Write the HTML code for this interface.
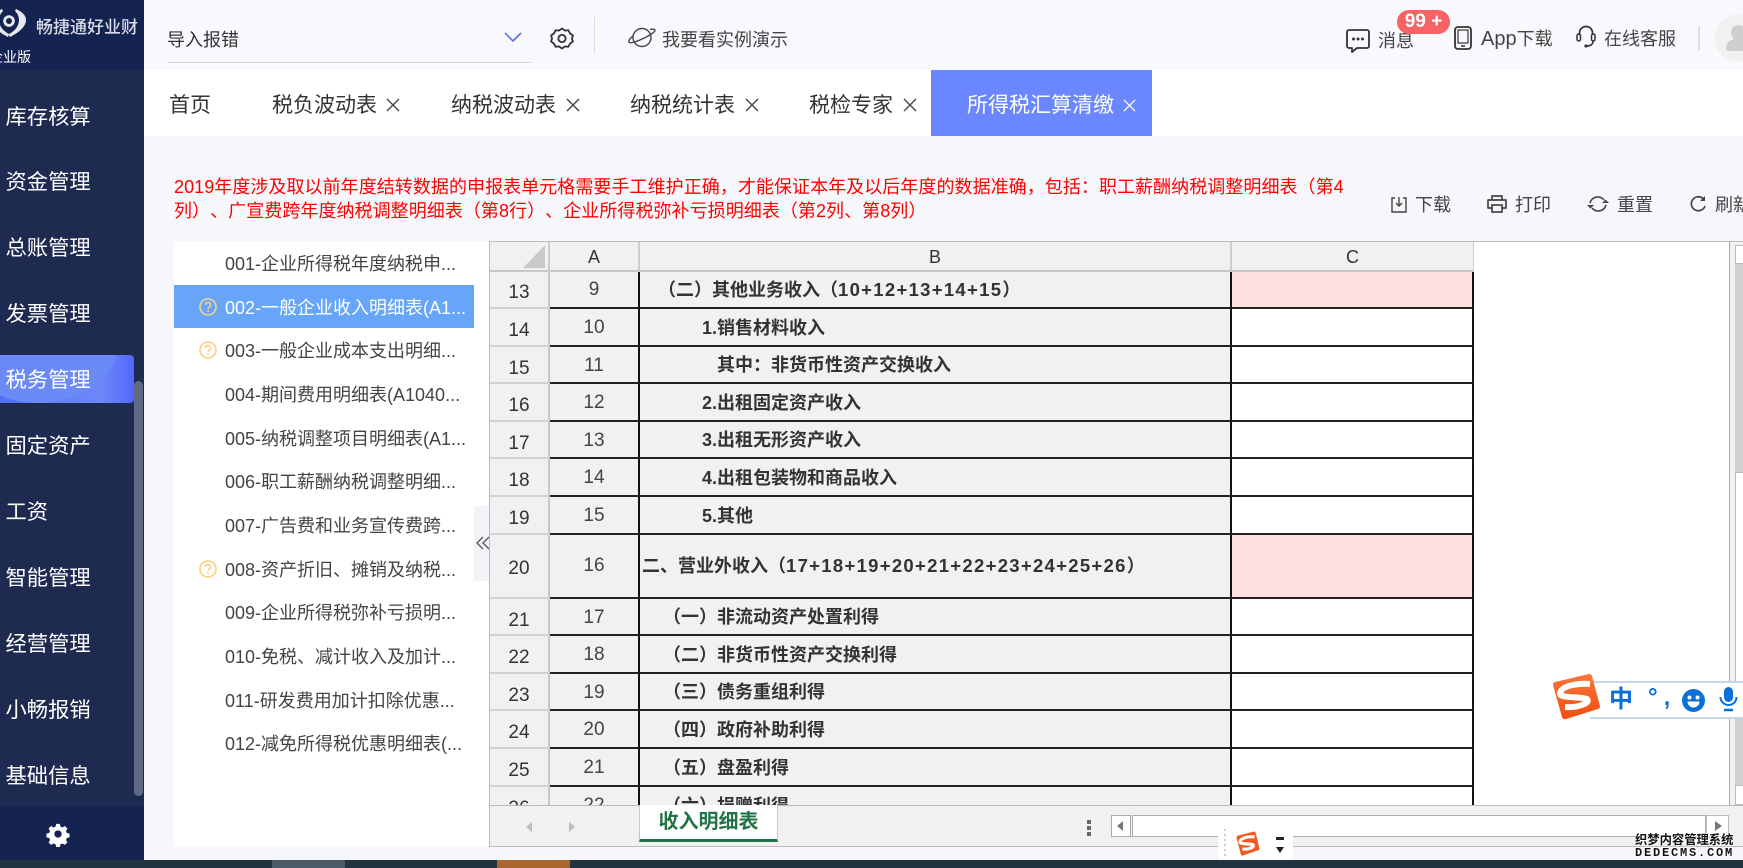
<!DOCTYPE html>
<html lang="zh-CN">
<head>
<meta charset="utf-8">
<title>所得税汇算清缴</title>
<style>
*{box-sizing:border-box;margin:0;padding:0}
html,body{width:1743px;height:868px;overflow:hidden;background:#f6f7fb}
body{position:relative;font-family:"Liberation Sans","Noto Sans CJK SC",sans-serif;color:#333;font-size:18px;text-spacing-trim:space-all}
.a{position:absolute;white-space:nowrap}
svg{position:absolute;display:block;overflow:visible}
.nav{position:absolute;left:5.5px;width:120px;height:30px;line-height:30px;color:#fff;font-size:21.3px;white-space:nowrap}
.tab{position:absolute;top:91px;height:30px;line-height:30px;font-size:21px;color:#333;white-space:nowrap}
.li{position:absolute;left:225px;height:26px;line-height:26px;font-size:18px;color:#444;white-space:nowrap}
.row{position:absolute;left:490px;width:984px;display:flex}
.row>div{height:100%;flex:none;white-space:nowrap;overflow:hidden}
.h{width:60px;background:#f1f1f1;border-bottom:2px solid #d2d2d2;border-right:2px solid #c8c8c8;text-align:center;color:#333;padding-top:4px;font-size:19px}
.n{width:90px;background:#f1f1f1;border-bottom:2px solid #222;border-right:2px solid #111;text-align:center;color:#444;font-size:19px;padding-top:1px}
.b{width:592px;background:#f1f1f1;border-bottom:2px solid #222;border-right:2px solid #111;font-weight:700;color:#333;font-size:18px;padding-top:1px}
.c{width:242px;background:#fff;border-bottom:2px solid #222;border-right:2px solid #111}
.p{background:#fce0e0}
.d{font-size:18.5px;letter-spacing:1.3px}
.red{position:absolute;left:174px;height:24px;line-height:24px;font-size:18px;color:#f00;white-space:nowrap;letter-spacing:.055px}
</style>
</head>
<body>

<!-- sidebar -->
<div class="a" style="left:0;top:0;width:144px;height:860px;background:#1e2a50"></div>
<div class="a" style="left:0;top:0;width:144px;height:70px;background:#152352"></div>
<svg style="left:0;top:0" width="40" height="45" viewBox="0 0 40 45">
<path d="M16 9 C22 12 26 15 26 20 C26 27 18 33 10 37 C9.500 36 9 35 9 34 C15 31 19 26 19 20 C19 16 17 13 15 11Z" fill="#e8e9ee"/>
<path d="M2 9 C-4 12 -8 15 -8 20 C-8 27 0 33 8 37 C8.500 36 9 35 9 34 C3 31 -1 26 -1 20 C-1 16 1 13 3 11Z" fill="#e8e9ee"/>
<circle cx="9" cy="21" r="4.400" fill="none" stroke="#e8e9ee" stroke-width="2.800"/>
</svg>
<div class="a" style="left:36px;top:16px;height:24px;line-height:24px;font-size:17px;color:#d8dbe6;font-weight:500">畅捷通好业财</div>
<div class="a" style="left:-11px;top:47px;height:20px;line-height:20px;font-size:14px;color:#fff">企业版</div>

<div class="a" style="left:0;top:355px;width:134px;height:48px;border-radius:0 4px 4px 0;background:linear-gradient(90deg,#4f70f0 0%,#6e89fb 75%,#5268fb 100%);overflow:hidden">
<div class="a" style="left:-40px;top:-70px;width:158px;height:118px;border-radius:50%;background:#6b8af8"></div>
</div>
<div class="nav" style="top:102px">库存核算</div>
<div class="nav" style="top:167px">资金管理</div>
<div class="nav" style="top:233px">总账管理</div>
<div class="nav" style="top:299px">发票管理</div>
<div class="nav" style="top:365px">税务管理</div>
<div class="nav" style="top:431px">固定资产</div>
<div class="nav" style="top:497px">工资</div>
<div class="nav" style="top:563px">智能管理</div>
<div class="nav" style="top:629px">经营管理</div>
<div class="nav" style="top:695px">小畅报销</div>
<div class="nav" style="top:761px">基础信息</div>
<div class="a" style="left:134px;top:381px;width:9px;height:415px;border-radius:5px;background:#5f6a85"></div>
<div class="a" style="left:0;top:807px;width:144px;height:53px;background:#152352"></div>
<svg style="left:47px;top:823px" width="22" height="22" viewBox="0 0 24 24">
<path fill="#fff" fill-rule="evenodd" d="M10 1h4l.7 3 2.200.9 2.600-1.600 2.800 2.800-1.600 2.600.9 2.200 3 .7v4l-3 .7-.9 2.200 1.600 2.600-2.800 2.800-2.600-1.600-2.200.9-.7 3h-4l-.7-3-2.200-.9-2.600 1.600-2.800-2.800 1.600-2.600-.9-2.200-3-.7v-4l3-.7.9-2.200-1.600-2.600 2.800-2.800 2.600 1.600 2.200-.9zM12 8a4 4 0 1 0 0 8 4 4 0 0 0 0-8z"/>
</svg>

<!-- header -->
<div class="a" style="left:144px;top:0;width:1599px;height:70px;background:#f8f9fd"></div>
<div class="a" style="left:167px;top:27px;height:26px;line-height:26px;font-size:18px;color:#333">导入报错</div>
<div class="a" style="left:167px;top:62px;width:364px;height:1px;background:#d9d9d9"></div>
<svg style="left:504px;top:32px" width="18" height="10" viewBox="0 0 18 10"><path d="M1 1l8 8 8-8" fill="none" stroke="#5a6fe0" stroke-width="1.600"/></svg>
<svg style="left:550px;top:27px" width="24" height="23" viewBox="0 0 24 24"><path fill="none" stroke="#333" stroke-width="1.900" stroke-linejoin="round" d="M12 1.500l3 2.200 3.700-.3 1.700 3.300 3 2.200-1 3.100 1 3.100-3 2.200-1.700 3.300-3.700-.3-3 2.200-3-2.200-3.700.3-1.700-3.300-3-2.200 1-3.100-1-3.100 3-2.200 1.700-3.300 3.700.3z"/><circle cx="12" cy="12" r="3.800" fill="none" stroke="#333" stroke-width="1.900"/></svg>
<div class="a" style="left:594px;top:17px;width:1px;height:37px;background:#ddd"></div>
<svg style="left:628px;top:27px" width="28" height="21" viewBox="0 0 28 21"><circle cx="14" cy="10.500" r="9" fill="none" stroke="#444" stroke-width="1.400"/><path d="M5 9C1 12 0 15 1.500 15.500 5 17 22 9 26.500 4.500 28 2.500 26 1.500 22 2.500" fill="none" stroke="#444" stroke-width="1.400"/></svg>
<div class="a" style="left:662px;top:27px;height:26px;line-height:26px;font-size:18px;color:#444">我要看实例演示</div>

<svg style="left:1346px;top:29px" width="24" height="24" viewBox="0 0 24 24"><path d="M3 1h18a2 2 0 0 1 2 2v14a2 2 0 0 1-2 2H11l-5 4v-4H3a2 2 0 0 1-2-2V3a2 2 0 0 1 2-2z" fill="none" stroke="#333" stroke-width="1.800" stroke-linejoin="round"/><circle cx="7.500" cy="10" r="1.500" fill="#333"/><circle cx="12" cy="10" r="1.500" fill="#333"/><circle cx="16.500" cy="10" r="1.500" fill="#333"/></svg>
<div class="a" style="left:1378px;top:28px;height:26px;line-height:26px;font-size:18px;color:#444">消息</div>
<div class="a" style="left:1397px;top:10px;width:53px;height:24px;border-radius:12px;background:#f96264;color:#fff;font-weight:700;font-size:19px;line-height:23px;text-align:center">99 +</div>
<svg style="left:1454px;top:26px" width="18" height="24" viewBox="0 0 18 24"><rect x="1" y="1" width="16" height="22" rx="3" fill="none" stroke="#333" stroke-width="1.800"/><rect x="4" y="4" width="10" height="13" fill="none" stroke="#333" stroke-width="1.200"/><path d="M7 20h4" stroke="#333" stroke-width="1.500"/></svg>
<div class="a" style="left:1481px;top:26px;height:26px;line-height:26px;font-size:18px;color:#444"><span style="font-size:20px">App</span>下载</div>
<svg style="left:1576px;top:25px" width="20" height="23" viewBox="0 0 20 23"><path d="M3.500 10V8a6.500 6.500 0 0 1 13 0v2" fill="none" stroke="#333" stroke-width="1.700"/><rect x="1" y="9" width="3.500" height="7" rx="1.700" fill="none" stroke="#333" stroke-width="1.500"/><rect x="15.500" y="9" width="3.500" height="7" rx="1.700" fill="none" stroke="#333" stroke-width="1.500"/><path d="M17 16c0 3-2 5-6 5" fill="none" stroke="#333" stroke-width="1.600"/><circle cx="10" cy="21" r="1.600" fill="#333"/></svg>
<div class="a" style="left:1604px;top:26px;height:26px;line-height:26px;font-size:18px;color:#444">在线客服</div>
<div class="a" style="left:1698px;top:26px;width:2px;height:24px;background:#ddd"></div>
<div class="a" style="left:1715px;top:14px;width:48px;height:48px;border-radius:50%;background:#f1f1f1;overflow:hidden">
<div class="a" style="left:16px;top:11px;width:15px;height:15px;border-radius:50%;background:#cfcfcf"></div>
<div class="a" style="left:11px;top:25px;width:28px;height:12px;border-radius:10px 10px 3px 3px;background:#cfcfcf"></div>
</div>

<!-- tabs -->
<div class="a" style="left:144px;top:70px;width:1599px;height:66px;background:#fff"></div>
<div class="a" style="left:931px;top:70px;width:221px;height:66px;background:#6b87ff"></div>
<div class="tab" style="left:169px">首页</div>
<div class="tab" style="left:272px">税负波动表</div>
<div class="tab" style="left:451px">纳税波动表</div>
<div class="tab" style="left:630px">纳税统计表</div>
<div class="tab" style="left:809px">税检专家</div>
<div class="tab" style="left:967px;color:#fff">所得税汇算清缴</div>
<svg style="left:386px;top:98px" width="14" height="14" viewBox="0 0 14 14"><path d="M1 1l12 12M13 1L1 13" stroke="#444" stroke-width="1.400"/></svg>
<svg style="left:566px;top:98px" width="14" height="14" viewBox="0 0 14 14"><path d="M1 1l12 12M13 1L1 13" stroke="#444" stroke-width="1.400"/></svg>
<svg style="left:745px;top:98px" width="14" height="14" viewBox="0 0 14 14"><path d="M1 1l12 12M13 1L1 13" stroke="#444" stroke-width="1.400"/></svg>
<svg style="left:903px;top:98px" width="14" height="14" viewBox="0 0 14 14"><path d="M1 1l12 12M13 1L1 13" stroke="#444" stroke-width="1.400"/></svg>
<svg style="left:1123px;top:99px" width="13" height="13" viewBox="0 0 14 14"><path d="M1 1l12 12M13 1L1 13" stroke="#fff" stroke-width="1.400"/></svg>

<!-- notice -->
<div class="red" style="top:175px">2019年度涉及取以前年度结转数据的申报表单元格需要手工维护正确，才能保证本年及以后年度的数据准确，包括：职工薪酬纳税调整明细表（第4</div>
<div class="red" style="top:199px">列）、广宣费跨年度纳税调整明细表（第8行）、企业所得税弥补亏损明细表（第2列、第8列）</div>

<!-- toolbar -->
<svg style="left:1391px;top:196px" width="16" height="17" viewBox="0 0 16 17"><path d="M4 2H1v14h14V2h-3M8 1v9M5 7l3 3 3-3" fill="none" stroke="#444" stroke-width="1.400"/></svg>
<div class="a" style="left:1415px;top:192px;height:26px;line-height:26px;font-size:18px;color:#444">下载</div>
<svg style="left:1487px;top:195px" width="20" height="18" viewBox="0 0 20 18"><path d="M5 5V1h10v4M5 13H1V5h18v8h-4" fill="none" stroke="#444" stroke-width="1.700" stroke-linejoin="round"/><rect x="5" y="10" width="10" height="7" fill="none" stroke="#444" stroke-width="1.700"/></svg>
<div class="a" style="left:1515px;top:192px;height:26px;line-height:26px;font-size:18px;color:#444">打印</div>
<svg style="left:1587px;top:195px" width="22" height="18" viewBox="0 0 22 18"><path d="M3 8a8 8 0 0 1 14-3M19 10a8 8 0 0 1-14 3" fill="none" stroke="#444" stroke-width="1.600"/><path d="M15 8h7l-3.500-3.500zM7 10H0l3.500 3.500z" fill="#444"/></svg>
<div class="a" style="left:1617px;top:192px;height:26px;line-height:26px;font-size:18px;color:#444">重置</div>
<svg style="left:1690px;top:195px" width="17" height="18" viewBox="0 0 17 18"><path d="M15 11a7 7 0 1 1-2-7.500" fill="none" stroke="#444" stroke-width="1.700"/><path d="M15 1v5h-5z" fill="#444"/></svg>
<div class="a" style="left:1715px;top:192px;height:26px;line-height:26px;font-size:18px;color:#444">刷新</div>

<!-- left list -->
<div class="a" style="left:174px;top:241px;width:316px;height:605px;background:#fff"></div>
<div class="a" style="left:174px;top:285px;width:300px;height:43px;background:#66a5f8"></div>
<div class="li" style="top:251px">001-企业所得税年度纳税申...</div>
<div class="li" style="top:295px;color:#fff">002-一般企业收入明细表(A1...</div>
<div class="li" style="top:338px">003-一般企业成本支出明细...</div>
<div class="li" style="top:382px">004-期间费用明细表(A1040...</div>
<div class="li" style="top:426px">005-纳税调整项目明细表(A1...</div>
<div class="li" style="top:469px">006-职工薪酬纳税调整明细...</div>
<div class="li" style="top:513px">007-广告费和业务宣传费跨...</div>
<div class="li" style="top:557px">008-资产折旧、摊销及纳税...</div>
<div class="li" style="top:600px">009-企业所得税弥补亏损明...</div>
<div class="li" style="top:644px">010-免税、减计收入及加计...</div>
<div class="li" style="top:688px">011-研发费用加计扣除优惠...</div>
<div class="li" style="top:731px">012-减免所得税优惠明细表(...</div>
<svg style="left:199px;top:298px" width="18" height="18" viewBox="0 0 18 18"><circle cx="9" cy="9" r="8" fill="none" stroke="#f5d28a" stroke-width="1.600"/><path d="M6.500 7a2.500 2.500 0 1 1 3.700 2.200C9.400 9.700 9 10 9 11" fill="none" stroke="#f5d28a" stroke-width="1.500"/><circle cx="9" cy="13.300" r="1" fill="#f5d28a"/></svg>
<svg style="left:199px;top:341px" width="18" height="18" viewBox="0 0 18 18"><circle cx="9" cy="9" r="8" fill="none" stroke="#fbcf7a" stroke-width="1.600"/><path d="M6.500 7a2.500 2.500 0 1 1 3.700 2.200C9.400 9.700 9 10 9 11" fill="none" stroke="#fbcf7a" stroke-width="1.500"/><circle cx="9" cy="13.300" r="1" fill="#fbcf7a"/></svg>
<svg style="left:199px;top:560px" width="18" height="18" viewBox="0 0 18 18"><circle cx="9" cy="9" r="8" fill="none" stroke="#fbcf7a" stroke-width="1.600"/><path d="M6.500 7a2.500 2.500 0 1 1 3.700 2.200C9.400 9.700 9 10 9 11" fill="none" stroke="#fbcf7a" stroke-width="1.500"/><circle cx="9" cy="13.300" r="1" fill="#fbcf7a"/></svg>
<div class="a" style="left:474px;top:506px;width:15px;height:75px;background:#f3f4fa"></div>
<svg style="left:476px;top:536px" width="13" height="14" viewBox="0 0 13 14"><path d="M7 1L1 7l6 6M13 1L7 7l6 6" fill="none" stroke="#555" stroke-width="1.300"/></svg>

<!-- sheet -->
<div class="a" style="left:489px;top:241px;width:1254px;height:606px;background:#fff;border:1px solid #bbb;border-right:0"></div>

<div class="a" style="left:0;top:0;width:1743px;height:805px;overflow:hidden;pointer-events:none">
<div class="row" style="top:271px;height:38px;line-height:36px"><div class="h">13</div><div class="n">9</div><div class="b" style="padding-left:18px">（二）其他业务收入（<span class="d">10+12+13+14+15</span>）</div><div class="c p"></div></div>
<div class="row" style="top:309px;height:38px;line-height:36px"><div class="h">14</div><div class="n">10</div><div class="b" style="padding-left:62px">1.销售材料收入</div><div class="c"></div></div>
<div class="row" style="top:347px;height:37px;line-height:35px"><div class="h">15</div><div class="n">11</div><div class="b" style="padding-left:77px">其中：非货币性资产交换收入</div><div class="c"></div></div>
<div class="row" style="top:384px;height:38px;line-height:36px"><div class="h">16</div><div class="n">12</div><div class="b" style="padding-left:62px">2.出租固定资产收入</div><div class="c"></div></div>
<div class="row" style="top:422px;height:37px;line-height:35px"><div class="h">17</div><div class="n">13</div><div class="b" style="padding-left:62px">3.出租无形资产收入</div><div class="c"></div></div>
<div class="row" style="top:459px;height:38px;line-height:36px"><div class="h">18</div><div class="n">14</div><div class="b" style="padding-left:62px">4.出租包装物和商品收入</div><div class="c"></div></div>
<div class="row" style="top:497px;height:38px;line-height:36px"><div class="h">19</div><div class="n">15</div><div class="b" style="padding-left:62px">5.其他</div><div class="c"></div></div>
<div class="row" style="top:535px;height:64px;line-height:60px"><div class="h">20</div><div class="n">16</div><div class="b" style="padding-left:2px">二、营业外收入（<span class="d">17+18+19+20+21+22+23+24+25+26</span>）</div><div class="c p"></div></div>
<div class="row" style="top:599px;height:37px;line-height:35px"><div class="h">21</div><div class="n">17</div><div class="b" style="padding-left:23px">（一）非流动资产处置利得</div><div class="c"></div></div>
<div class="row" style="top:636px;height:38px;line-height:36px"><div class="h">22</div><div class="n">18</div><div class="b" style="padding-left:23px">（二）非货币性资产交换利得</div><div class="c"></div></div>
<div class="row" style="top:674px;height:37px;line-height:35px"><div class="h">23</div><div class="n">19</div><div class="b" style="padding-left:23px">（三）债务重组利得</div><div class="c"></div></div>
<div class="row" style="top:711px;height:38px;line-height:36px"><div class="h">24</div><div class="n">20</div><div class="b" style="padding-left:23px">（四）政府补助利得</div><div class="c"></div></div>
<div class="row" style="top:749px;height:38px;line-height:36px"><div class="h">25</div><div class="n">21</div><div class="b" style="padding-left:23px">（五）盘盈利得</div><div class="c"></div></div>
<div class="row" style="top:787px;height:38px;line-height:36px"><div class="h">26</div><div class="n">22</div><div class="b" style="padding-left:23px">（六）捐赠利得</div><div class="c"></div></div>
</div>

<div class="a" style="left:490px;top:242px;width:1240px;height:30px;font-size:18px;line-height:30px;color:#333">
<div class="a" style="left:0;top:0;width:60px;height:30px;background:#f1f1f1;border-right:2px solid #ccc;border-bottom:2px solid #c8c8c8"></div>
<div class="a" style="left:60px;top:0;width:90px;height:30px;background:#f1f1f1;border-right:2px solid #ccc;border-bottom:2px solid #c8c8c8;text-align:center">A</div>
<div class="a" style="left:150px;top:0;width:592px;height:30px;background:#f1f1f1;border-right:2px solid #ccc;border-bottom:2px solid #c8c8c8;text-align:center">B</div>
<div class="a" style="left:742px;top:0;width:242px;height:30px;background:#f1f1f1;border-right:1px solid #ccc;border-bottom:2px solid #c8c8c8;text-align:center">C</div>
</div>
<svg style="left:523px;top:245px" width="22" height="23" viewBox="0 0 22 23"><path d="M22 0v23H0z" fill="#c9c9c9"/></svg>

<!-- sheet right scrollbar -->
<div class="a" style="left:1729px;top:242px;width:14px;height:563px;background:#f1f1f1;border-left:1px solid #aaa"></div>
<div class="a" style="left:1735px;top:264px;width:8px;height:521px;background:#d0d0d0"></div>
<div class="a" style="left:1735px;top:472px;width:8px;height:246px;background:#fff;border:1px solid #bbb;border-right:0"></div>
<div class="a" style="left:1735px;top:245px;width:8px;height:19px;background:#fff;border:1px solid #bbb;border-right:0"></div>
<div class="a" style="left:1735px;top:785px;width:8px;height:20px;background:#fff;border:1px solid #bbb;border-right:0"></div>

<!-- sheet tab bar -->
<div class="a" style="left:490px;top:805px;width:1253px;height:41px;background:#f1f1f1;border-top:1px solid #bbb"></div>
<svg style="left:526px;top:821px" width="52" height="12" viewBox="0 0 52 12"><path d="M6 1v10L0 6zM43 1v10l6-5z" fill="#bdbdbd"/></svg>
<div class="a" style="left:639px;top:805px;width:139px;height:37px;background:#fff;border:1px solid #c8c8c8;border-top:0;border-bottom:3px solid #217346;text-align:center;font-weight:700;font-size:20px;line-height:34px;color:#217346">收入明细表</div>
<div class="a" style="left:1087px;top:820px;width:4px;height:4px;background:#666"></div>
<div class="a" style="left:1087px;top:826px;width:4px;height:4px;background:#666"></div>
<div class="a" style="left:1087px;top:832px;width:4px;height:4px;background:#666"></div>
<div class="a" style="left:1111px;top:815px;width:20px;height:22px;background:#fff;border:1px solid #aaa"></div>
<svg style="left:1117px;top:821px" width="7" height="10" viewBox="0 0 7 10"><path d="M6 0v10L0 5z" fill="#777"/></svg>
<div class="a" style="left:1132px;top:815px;width:574px;height:22px;background:#fff;border:1px solid #aaa"></div>
<div class="a" style="left:1706px;top:815px;width:23px;height:22px;background:#fff;border:1px solid #bbb"></div>
<svg style="left:1715px;top:821px" width="7" height="10" viewBox="0 0 7 10"><path d="M0 0v10l7-5z" fill="#777"/></svg>

<!-- bottom strip -->
<div class="a" style="left:0;top:860px;width:1743px;height:8px;background:#21343f"></div>
<div class="a" style="left:272px;top:860px;width:73px;height:8px;background:#4a5a68"></div>
<div class="a" style="left:497px;top:860px;width:73px;height:8px;background:#a9662f"></div>

<!-- IME bar -->
<div class="a" style="left:1590px;top:681px;width:153px;height:38px;background:#fff;border-top:2px solid #c5d5ec;border-bottom:2px solid #c5d5ec"></div>
<svg style="left:1552px;top:673px" width="49" height="47" viewBox="0 0 49 47">
<defs><linearGradient id="g" x1="0" y1="0" x2="0" y2="1"><stop offset="0" stop-color="#f6763a"/><stop offset="1" stop-color="#f34d10"/></linearGradient></defs>
<path d="M3 9L37 1a3 3 0 0 1 3 2l8 30a3 3 0 0 1-2 3L14 46a3 3 0 0 1-4-2L1 12a3 3 0 0 1 2-3z" fill="url(#g)"/>
<path d="M38 11C28 10 10 12 8 20 7 26 28 23 35 26 39 30 26 35 13 34" fill="none" stroke="#fff" stroke-width="6"/>
</svg>
<div class="a" style="left:1609px;top:687px;width:24px;height:26px;line-height:26px;text-align:center;font-size:24px;font-weight:700;color:#0b6fd9">中</div>
<div class="a" style="left:1648px;top:685px;height:26px;line-height:26px;font-size:24px;font-weight:700;letter-spacing:6px;color:#0b6fd9">°,</div>
<svg style="left:1682px;top:689px" width="23" height="23" viewBox="0 0 23 23"><circle cx="11.500" cy="11.500" r="11.500" fill="#0b6fd9"/><circle cx="7.500" cy="8.500" r="2" fill="#fff"/><circle cx="15.500" cy="8.500" r="2" fill="#fff"/><path d="M5.500 12.500h12a6 6 0 0 1-12 0z" fill="#fff"/></svg>
<svg style="left:1719px;top:687px" width="19" height="25" viewBox="0 0 19 25"><rect x="5" y="0" width="9" height="15" rx="4.500" fill="#0b6fd9"/><path d="M1.500 10a8 8 0 0 0 16 0" fill="none" stroke="#0b6fd9" stroke-width="2"/><path d="M5 23h9" stroke="#0b6fd9" stroke-width="2.500"/></svg>

<!-- small IME -->
<div class="a" style="left:1218px;top:828px;width:75px;height:32px;background:#fff"></div>
<div class="a" style="left:1224px;top:829px;width:2px;height:30px;background:repeating-linear-gradient(180deg,#cfcfcf 0 2px,transparent 2px 5px)"></div>
<svg style="left:1236px;top:831px" width="24" height="25" viewBox="0 0 49 47" preserveAspectRatio="none"><path d="M3 9L37 1a3 3 0 0 1 3 2l8 30a3 3 0 0 1-2 3L14 46a3 3 0 0 1-4-2L1 12a3 3 0 0 1 2-3z" fill="#f4581c"/><path d="M38 11C28 10 10 12 8 20 7 26 28 23 35 26 39 30 26 35 13 34" fill="none" stroke="#fff" stroke-width="6"/></svg>
<div class="a" style="left:1276px;top:837px;width:8px;height:3px;background:#222"></div>
<svg style="left:1276px;top:847px" width="8" height="6" viewBox="0 0 8 6"><path d="M0 0h8L4 6z" fill="#222"/></svg>

<!-- watermark -->
<div class="a" style="left:1635px;top:833px;height:14px;line-height:14px;font-size:12.300px;font-weight:700;color:#111;text-shadow:1px 0 0 #fff,-1px 0 0 #fff,0 1px 0 #fff,0 -1px 0 #fff">织梦内容管理系统</div>
<div class="a" style="left:1635px;top:847px;height:13px;line-height:13px;font-family:'Liberation Mono',monospace;font-size:12px;font-weight:700;letter-spacing:1.800px;color:#111;text-shadow:1px 0 0 #fff,-1px 0 0 #fff,0 1px 0 #fff,0 -1px 0 #fff">DEDECMS.COM</div>

</body>
</html>
